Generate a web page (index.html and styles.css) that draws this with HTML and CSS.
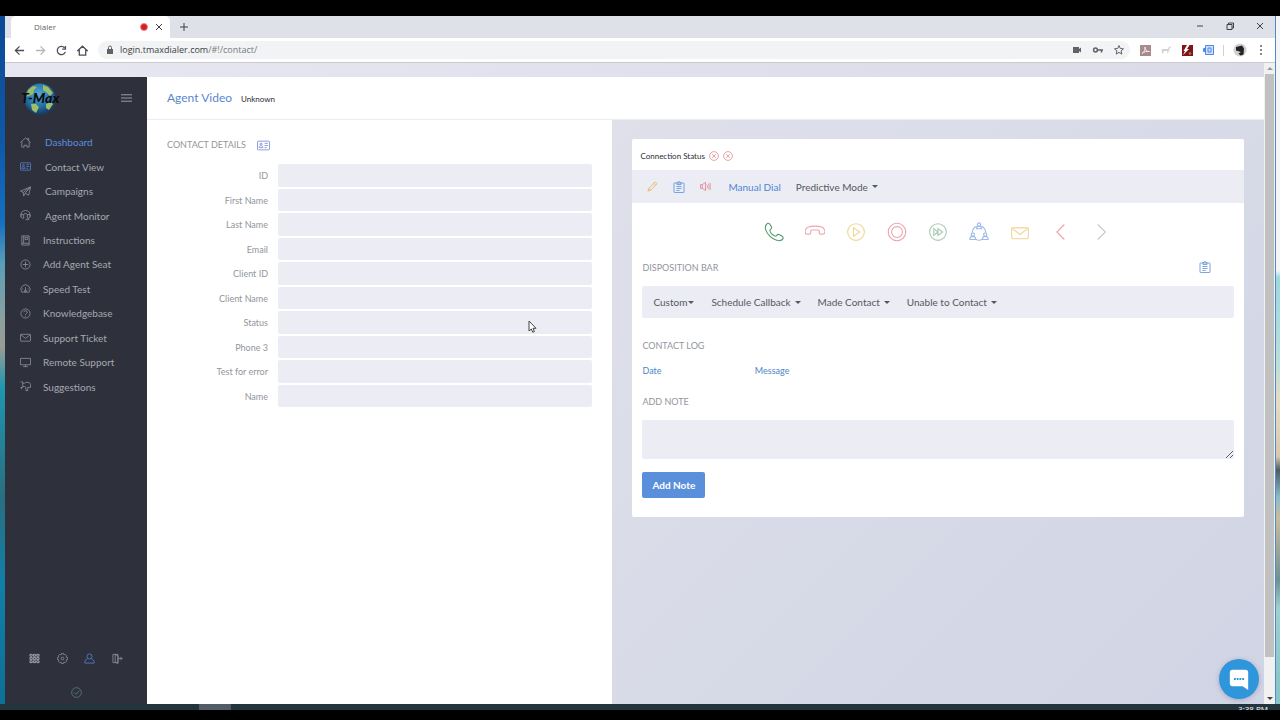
FILE: index.html
```html
<!DOCTYPE html>
<html lang="en">
<head>
  <meta charset="UTF-8">
  <meta name="viewport" content="width=device-width, initial-scale=1.0">
  <title>Dialer</title>
  <link rel="stylesheet" href="styles.css">
</head>
<body>
  <!-- Shared icons -->
  <svg class="sprite" aria-hidden="true">
    <symbol id="i-card" viewBox="0 0 24 24"><rect x="1" y="4" width="22" height="16" rx="1"/><circle cx="7.500" cy="9.500" r="2"/><path d="M4 16c0-5 7-5 7 0zM14 8h6M14 12h6M14 16h4"/></symbol>
    <symbol id="i-clip" viewBox="0 0 24 24"><rect x="2" y="4" width="20" height="19" rx="1"/><path d="M8 3h2a2 2 0 0 1 4 0h2v4H8zM7 11h10M7 15h10M7 19h6"/></symbol>
    <symbol id="i-mail" viewBox="0 0 24 24"><rect x="1" y="5" width="22" height="15" rx="1"/><path d="M2 6l10 8 10-8"/></symbol>
    <symbol id="i-x" viewBox="0 0 24 24"><circle cx="12" cy="12" r="10.500"/><path d="M7.500 7.500l9 9M16.500 7.500l-9 9"/></symbol>
  </svg>

  <div class="screen">
    <div class="wallpaper wallpaper-left"></div>

    <div class="browser">
      <div class="tab-strip">
        <div class="tab">
          <span class="tab-title">Dialer</span>
          <span class="rec"></span>
          <button class="chrome-btn" aria-label="Close tab"><svg viewBox="0 0 10 10"><path d="M2 2l6 6M8 2l-6 6"/></svg></button>
        </div>
        <button class="chrome-btn new-tab" aria-label="New tab"><svg viewBox="0 0 10 10"><path d="M5 1v8M1 5h8"/></svg></button>
        <div class="window-controls">
          <button class="chrome-btn" aria-label="Minimize"><svg viewBox="0 0 10 10"><path d="M2 5h6"/></svg></button>
          <button class="chrome-btn" aria-label="Restore"><svg viewBox="0 0 10 10"><path d="M2 3.500h5v5H2zM3.500 3.500V2h5v5H7"/></svg></button>
          <button class="chrome-btn" aria-label="Close"><svg viewBox="0 0 10 10"><path d="M2 2l6 6M8 2l-6 6"/></svg></button>
        </div>
      </div>

      <div class="toolbar">
        <button class="nav-btn" aria-label="Back"><svg viewBox="0 0 12 12"><path d="M11 6H2M6 1.500L1.500 6 6 10.500"/></svg></button>
        <button class="nav-btn dim" aria-label="Forward"><svg viewBox="0 0 12 12"><path d="M1 6h9M6 1.500L10.500 6 6 10.500"/></svg></button>
        <button class="nav-btn" aria-label="Reload"><svg viewBox="0 0 12 12"><path d="M10.200 7.500A4.500 4.500 0 1 1 9.300 3M10.300 1v3.500H6.800"/></svg></button>
        <button class="nav-btn" aria-label="Home"><svg viewBox="0 0 12 12"><path d="M1 6l5-4.700L11 6H9.500v5h-7V6z"/></svg></button>
        <div class="omnibox">
          <svg class="lock" viewBox="0 0 8 10"><rect x="1" y="4" width="6" height="5" fill="#5f6368"/><path d="M2.500 4V2.500a1.500 1.500 0 0 1 3 0V4" fill="none" stroke="#5f6368"/></svg>
          <div class="url"><a href="#!/contact/">login.tmaxdialer.com<span>/#!/contact/</span></a></div>
          <svg class="omni-icon" viewBox="0 0 12 12"><path d="M2 3h6v2l2-1.500v5L8 7v2H2z" fill="#5f6368"/></svg>
          <svg class="omni-icon" viewBox="0 0 12 12" fill="none" stroke="#5f6368" stroke-width="1.500"><circle cx="3.500" cy="6" r="1.900"/><path d="M5.500 6H11M9.500 6v2.500"/></svg>
          <svg class="omni-icon" viewBox="0 0 12 12" fill="none" stroke="#5f6368"><path d="M6 1.500l1.300 3 3.200.3-2.400 2.100.7 3.200L6 8.400l-2.800 1.700.7-3.200L1.500 4.800l3.200-.3z"/></svg>
        </div>
        <div class="extensions">
          <svg viewBox="0 0 12 12"><rect x="1" y="1" width="11" height="11" fill="#a98b8d"/><path d="M3 9.500c2-1 3.500-4 3-6.500 0 3 2 5 4.500 4.500C7 7 5 8 3 9.500" fill="none" stroke="#f2e8e8"/></svg>
          <svg viewBox="0 0 12 12"><path d="M1 7l1-2h6l1-2.500 2.500.5-1.500 1-1 2-1 3.500H7.500L7 7H4l-1 2.500H2V6z" fill="#d2d2d2"/></svg>
          <svg viewBox="0 0 12 12"><rect x="1" y="1" width="11" height="11" fill="#821318"/><path d="M2 11l2-4H2.500L6 1h2.500L6 5h2z" fill="#fff"/><circle cx="9" cy="9.500" r="1.300" fill="#7d8a4d"/></svg>
          <svg viewBox="0 0 12 12"><path d="M3.500 1.500h8v9h-8z" fill="#cfe0fb" stroke="#4b86e8"/><path d="M3.500 3.500L1 4.500v3l2.500 1z" fill="#4b86e8"/><path d="M6 4h3v4H6z" fill="none" stroke="#4b86e8"/></svg>
          <span class="divider"></span>
          <svg class="avatar" viewBox="0 0 14 14"><circle cx="7" cy="7" r="6.500" fill="#d0cfd1"/><path d="M3 4l6-1.500 2 3-.5 6-3 1-2-2L8 9 3 7.500z" fill="#222"/></svg>
          <svg class="more" viewBox="0 0 4 12" fill="#5f6368"><circle cx="2" cy="2" r="1"/><circle cx="2" cy="6" r="1"/><circle cx="2" cy="10" r="1"/></svg>
        </div>
      </div>

      <div class="viewport">
        <div class="app">
          <aside class="sidebar">
            <div class="brand">
              <svg class="logo" viewBox="0 0 40 32" role="img" aria-label="T-Max">
                <defs>
                  <radialGradient id="globe" cx="45%" cy="35%" r="62%">
                    <stop offset="0%" stop-color="#58a9d0"/>
                    <stop offset="60%" stop-color="#2574aa"/>
                    <stop offset="100%" stop-color="#153f6c"/>
                  </radialGradient>
                </defs>
                <circle cx="20" cy="16" r="15.500" fill="url(#globe)"/>
                <path d="M8 7l5-4 4 1-3 3-1 4-4 2-3 1zM23 2l5 2 5 6-3 3-4-4-3-2zM11 21l5 0 3 3-3 6-4-3zM26 21l5-2 2 2-4 6-3-2z" fill="#9dbd68"/>
                <text x="1" y="20" class="logo-text">T-Max</text>
              </svg>
              <button class="menu-toggle" aria-label="Toggle menu"><svg viewBox="0 0 12 10"><path d="M0 1.500h12M0 5h12M0 8.500h12"/></svg></button>
            </div>

            <nav class="side-nav">
              <a class="wide active" href="#dashboard"><svg class="icon" viewBox="0 0 24 24"><path d="M1 12L12 2l11 10M4 10v12h5v-4h6v4h5V10M17 6V3h2v5"/></svg>Dashboard</a>
              <a class="wide" href="#contact"><svg class="icon blue"><use href="#i-card"/></svg>Contact View</a>
              <a class="wide" href="#campaigns"><svg class="icon" viewBox="0 0 24 24"><path d="M1 11L23 2l-4 18-8-4-3 6-1-8zM7 14L23 2 11 16"/></svg>Campaigns</a>
              <a class="wide" href="#monitor"><svg class="icon" viewBox="0 0 24 24"><path d="M2 15V10a10 9 0 0 1 20 0v5M2 10h6v8H5l-3-3v-4zM22 10h-6v8h3l3-3v-4zM19 18v3h-7M8 10c0-3 8-3 8 0"/></svg>Agent Monitor</a>
              <a href="#instructions"><svg class="icon" viewBox="0 0 24 24"><path d="M4 2h16v20H4zM4 18h16M8 2v16M11 5h6v5h-6z"/></svg>Instructions</a>
              <a href="#seat"><svg class="icon" viewBox="0 0 24 24"><circle cx="12" cy="12" r="10"/><path d="M12 6v12M6 12h12"/></svg>Add Agent Seat</a>
              <a href="#speed"><svg class="icon" viewBox="0 0 24 24"><path d="M4 20a10 10 0 1 1 16 0zM12 9v7M10 16h4v3h-4zM5 13h2M17 13h2"/></svg>Speed Test</a>
              <a href="#kb"><svg class="icon" viewBox="0 0 24 24"><circle cx="12" cy="12" r="10"/><path d="M8 9c0-4 8-4 8 0 0 3-4 3-4 6M12 17v2"/></svg>Knowledgebase</a>
              <a href="#ticket"><svg class="icon"><use href="#i-mail"/></svg>Support Ticket</a>
              <a href="#remote"><svg class="icon" viewBox="0 0 24 24"><path d="M1 3h22v14H1zM12 17v4M7 21h10"/></svg>Remote Support</a>
              <a href="#suggestions"><svg class="icon" viewBox="0 0 24 24"><path d="M1 2h5v12H1M6 5h4l2-2h8l3 4v7h-6v7h-4v-7l-3-2H6M3 14v4"/></svg>Suggestions</a>
            </nav>

            <div class="side-tools">
              <button aria-label="Apps"><svg class="icon bright" viewBox="0 0 24 24"><path d="M2 3h5v4H2zM9.500 3h5v4h-5zM17 3h5v4h-5zM2 10h5v4H2zM9.500 10h5v4h-5zM17 10h5v4h-5zM2 17h5v4H2zM9.500 17h5v4h-5zM17 17h5v4h-5z"/></svg></button>
              <button aria-label="Settings"><svg class="icon" viewBox="0 0 24 24"><path d="M10 1h4l1 3 3-1 3 3-1 3 3 1v4l-3 1 1 3-3 3-3-1-1 3h-4l-1-3-3 1-3-3 1-3-3-1v-4l3-1-1-3 3-3 3 1z"/><circle cx="12" cy="12" r="3"/></svg></button>
              <button aria-label="Profile"><svg class="icon blue" viewBox="0 0 24 24"><circle cx="12" cy="7.500" r="5.500"/><path d="M8 12l-6 5v5h20v-5l-6-5"/></svg></button>
              <button aria-label="Log out"><svg class="icon" viewBox="0 0 24 24"><path d="M2 3h11v18H2zM7 3l6 3v17l-6-3zM13 12h9M18 8l4 4-4 4"/></svg></button>
            </div>
            <div class="side-status"><svg class="icon" viewBox="0 0 24 24"><circle cx="12" cy="12" r="10.500"/><path d="M7 12l4 4 7-8"/></svg></div>
          </aside>

          <main class="main">
            <header class="page-header">
              <h1>Agent Video</h1>
              <span>Unknown</span>
            </header>

            <div class="columns">
              <section class="details">
                <h2>CONTACT DETAILS <svg class="icon violet"><use href="#i-card"/></svg></h2>
                <form class="fields">
                  <label for="f-id">ID</label><input id="f-id" type="text">
                  <label for="f-first">First Name</label><input id="f-first" type="text">
                  <label for="f-last">Last Name</label><input id="f-last" type="text">
                  <label for="f-email">Email</label><input id="f-email" type="text">
                  <label for="f-client">Client ID</label><input id="f-client" type="text">
                  <label for="f-cname">Client Name</label><input id="f-cname" type="text">
                  <label for="f-status">Status</label><input id="f-status" type="text">
                  <label for="f-phone">Phone 3</label><input id="f-phone" type="text">
                  <label for="f-test">Test for error</label><input id="f-test" type="text">
                  <label for="f-name">Name</label><input id="f-name" type="text">
                </form>
              </section>

              <section class="work">
                <div class="card">
                  <div class="status-row">
                    Connection Status
                    <svg class="icon red"><use href="#i-x"/></svg>
                    <svg class="icon red"><use href="#i-x"/></svg>
                  </div>

                  <div class="action-row">
                    <button class="tool" aria-label="Edit"><svg class="icon orange" viewBox="0 0 24 24"><path d="M2 22l2-6L18 2l4 4L8 20zM15 5l4 4M4 16l4 4"/></svg></button>
                    <button class="tool" aria-label="Notes"><svg class="icon sky"><use href="#i-clip"/></svg></button>
                    <button class="tool" aria-label="Volume"><svg class="icon red" viewBox="0 0 24 24"><path d="M1 8h4l7-5v18l-7-5H1zM5 8v8M15 8c2 2 2 6 0 8M18 6c3 3 3 9 0 12M21 4c4 4 4 12 0 16"/></svg></button>
                    <a class="manual" href="#manual">Manual Dial</a>
                    <button class="menu">Predictive Mode <i class="caret"></i></button>
                  </div>

                  <div class="card-body">
                    <div class="call-row">
                      <button aria-label="Call"><svg viewBox="0 0 24 24" class="c-green"><path d="M3 3c2-3 4-1 6 3 1 2-2 3-2 4 0 3 4 7 7 7 1 0 2-3 4-2 5 2 6 4 4 6-3 3-10 1-15-4S0 6 3 3z"/></svg></button>
                      <button aria-label="Hang up"><svg viewBox="0 0 24 24" class="c-pink"><path d="M0 12c0-3 2-5 4-6 4-1 12-1 16 0 2 1 4 3 4 6 0 4-7 3-7 1 0-1 1-3-1-3.500H8C6 10 7 12 7 13c0 2-7 3-7-1z"/></svg></button>
                      <button aria-label="Play"><svg viewBox="0 0 24 24" class="c-yellow"><circle cx="12" cy="12" r="10"/><path d="M9 7v10l7.500-5z"/></svg></button>
                      <button aria-label="Record"><svg viewBox="0 0 24 24" class="c-pink"><circle cx="12" cy="12" r="10.500"/><circle cx="12" cy="12" r="6.500"/></svg></button>
                      <button aria-label="Skip"><svg viewBox="0 0 24 24" class="c-sage"><circle cx="12" cy="12" r="10"/><path d="M7 8v8l5-4zM12 8v8l5.500-4z"/></svg></button>
                      <button aria-label="Conference"><svg viewBox="0 0 24 24" class="c-blue"><path d="M9 5a8.500 8.500 0 0 0-5 7M15 5a8.500 8.500 0 0 1 5 7M8 20.500c3 2 5 2 8 0M9 8c0-4 6-4 6 0zM1 21c0-5 7-5 7 0zM16 21c0-5 7-5 7 0z"/><circle cx="12" cy="3" r="2"/><circle cx="4.500" cy="15" r="2"/><circle cx="19.500" cy="15" r="2"/></svg></button>
                      <button aria-label="Mail"><svg viewBox="0 0 24 24" class="c-yellow"><rect x="2" y="7" width="20" height="13" rx="1"/><path d="M3 8l9 7 9-7"/></svg></button>
                      <button aria-label="Previous"><svg viewBox="0 0 24 24" class="c-pink"><path d="M16 3l-9 9 9 9"/></svg></button>
                      <button aria-label="Next"><svg viewBox="0 0 24 24" class="c-gray"><path d="M7 3l9 9-9 9"/></svg></button>
                    </div>

                    <div class="heading-row">
                      <h3>DISPOSITION BAR</h3>
                      <button class="tool" aria-label="Disposition notes"><svg class="icon sky"><use href="#i-clip"/></svg></button>
                    </div>
                    <div class="disposition">
                      <button class="menu tight">Custom<i class="caret"></i></button>
                      <button class="menu">Schedule Callback <i class="caret"></i></button>
                      <button class="menu">Made Contact <i class="caret"></i></button>
                      <button class="menu">Unable to Contact <i class="caret"></i></button>
                    </div>

                    <h3>CONTACT LOG</h3>
                    <table class="log">
                      <thead><tr><th scope="col" class="date">Date</th><th scope="col">Message</th></tr></thead>
                    </table>

                    <h3><label for="note">ADD NOTE</label></h3>
                    <textarea id="note"></textarea>
                    <button class="primary">Add Note</button>
                  </div>
                </div>
              </section>
            </div>
          </main>
        </div>
        <div class="scrollbar"><i class="up"></i><span class="thumb"></span><i class="down"></i></div>
        <button class="chat" aria-label="Open chat"><svg viewBox="0 0 24 24"><path d="M5 2h14a3 3 0 0 1 3 3v19l-6-4H5a3 3 0 0 1-3-3V5a3 3 0 0 1 3-3z" fill="#fff"/><path d="M6.500 12h11" stroke="#2f96dc" stroke-width="2" stroke-dasharray="2 1"/></svg></button>
        <svg class="cursor" viewBox="0 0 9 13"><path d="M1 1v10l2.300-2 1.500 3.300 1.600-.8L5 8.300h3z" fill="#fff" stroke="#444"/></svg>
      </div>
    </div>

    <div class="wallpaper wallpaper-right"></div>
  </div>
  <div class="taskbar"><span class="task"></span><span class="clock">3:38 PM</span></div>
</body>
</html>
```
FILE: styles.css
```css
* {
  box-sizing: border-box;
}

body {
  margin: 0;
  min-height: 100vh;
  padding: 16px 0 10px;
  display: flex;
  flex-direction: column;
  background: #000;
  color: #555860;
  font-family: Lato, "Liberation Sans", sans-serif;
  font-size: 10px;
  line-height: 14px;
}

button {
  padding: 0;
  border: 0;
  background: none;
  color: inherit;
  font: inherit;
}

a {
  color: inherit;
  text-decoration: none;
}

h1, h2, h3 {
  margin: 0;
  font-weight: 400;
}

svg {
  display: block;
  flex: none;
}

.sprite {
  position: absolute;
  width: 0;
  height: 0;
}

.icon {
  width: 11px;
  height: 11px;
  fill: none;
  stroke: #8c8f99;
  stroke-width: 1.8;
}

.icon.bright { stroke: #b4b6be; }
.icon.blue { stroke: #5580cc; }
.icon.violet { stroke: #8f9bdc; width: 13px; height: 13px; }
.icon.red { stroke: #e0828c; }
.icon.orange { stroke: #e8b45c; }
.icon.sky { stroke: #6a9bdc; width: 12px; height: 12px; }

/* Desktop */
.screen {
  flex: 1;
  display: flex;
}

.wallpaper {
  width: 5px;
}

.wallpaper-left {
  background: linear-gradient(#0b4a94 0, #0e58a8 18%, #1470c0 30%, #5a9fb8 36%, #8ba0a0 44%, #9a9c92 48%, #1e96b0 54%, #2a6e80 70%, #127fa8 82%, #0d7096 100%);
}

.wallpaper-right {
  border-left: 1px solid #4c8cc8;
  background: linear-gradient(#f4f5f7 0, #f4f5f7 37%, #9fd8de 38%, #b9dedc 50%, #e6dcc4 56%, #d8c9ae 64%, #4c5c66 66%, #8cbccb 70%, #c9bd9c 73%, #6f9096 82%, #9ed0d0 86%, #86c4c6 100%);
}

.taskbar {
  height: 6px;
  padding: 0 12px 0 199px;
  display: flex;
  justify-content: space-between;
  overflow: hidden;
  background: #22343d;
}

.task {
  width: 32px;
  background: #525c64;
}

.clock {
  color: #fff;
  font: 8px/10px "Open Sans", sans-serif;
}

/* Browser */
.browser {
  flex: 1;
  display: flex;
  flex-direction: column;
  min-width: 0;
}

.tab-strip {
  height: 22px;
  padding-left: 6px;
  display: flex;
  align-items: center;
  background: #dfe1e9;
}

.tab {
  width: 159px;
  height: 22px;
  padding: 0 6px 0 23px;
  display: flex;
  align-items: center;
  border-radius: 5px 5px 0 0;
  background: #fff;
}

.tab-title {
  flex: 1;
  color: #5f6368;
  font: 8px/14px "Open Sans", sans-serif;
}

.rec {
  width: 8px;
  height: 8px;
  margin-right: 6px;
  border: 1px solid #e8888c;
  border-radius: 50%;
  background: #cf2027;
}

.chrome-btn svg {
  width: 10px;
  height: 10px;
  fill: none;
  stroke: #3c4043;
}

.new-tab {
  margin-left: 9px;
}

.window-controls {
  margin-left: auto;
  padding: 0 10px 2px 0;
  display: flex;
  gap: 20px;
}

.toolbar {
  height: 25px;
  padding: 0 12px 0 9px;
  display: flex;
  align-items: center;
  border-bottom: 1px solid #c9cad0;
  background: #fff;
}

.nav-btn {
  margin-right: 10px;
}

.nav-btn svg {
  width: 11px;
  height: 11px;
  fill: none;
  stroke: #4b4f54;
  stroke-width: 1.4;
}

.nav-btn.dim svg {
  stroke: #b4b6b9;
}

.omnibox {
  flex: 1;
  height: 18px;
  padding: 0 5px 0 8px;
  display: flex;
  align-items: center;
  gap: 9px;
  border-radius: 9px;
  background: #f1f3f4;
}

.lock {
  width: 8px;
  height: 10px;
}

.url {
  flex: 1;
  margin-left: -3px;
  color: #3c4043;
  font: 9px/14px "Open Sans", sans-serif;
}

.url span {
  color: #777b80;
}

.omni-icon {
  width: 12px;
  height: 12px;
}

.extensions {
  padding-left: 9px;
  display: flex;
  align-items: center;
  gap: 9px;
}

.extensions svg {
  width: 12px;
  height: 12px;
}

.extensions .avatar {
  width: 14px;
  height: 14px;
  margin-right: 3px;
}

.extensions .more {
  width: 4px;
}

.divider {
  width: 1px;
  height: 11px;
  background: #d0d2d5;
}

.viewport {
  position: relative;
  flex: 1;
  display: flex;
}

.app {
  flex: 1;
  padding-top: 14px;
  display: flex;
  background: linear-gradient(90deg, #e6e7f1, #dadbe7);
}

.scrollbar {
  width: 11px;
  padding: 4px 1px;
  display: flex;
  flex-direction: column;
  align-items: center;
  gap: 4px;
  background: #f1f1f1;
}

.thumb {
  width: 9px;
  flex: 1;
  margin-bottom: 36px;
  background: #c1c1c1;
}

.up, .down {
  border: 3px solid transparent;
}

.up {
  border-top: 0;
  border-bottom-color: #9a9a9a;
}

.down {
  border-bottom: 0;
  border-top-color: #444;
}

/* Sidebar */
.sidebar {
  width: 142px;
  display: flex;
  flex-direction: column;
  background: #2e313b;
}

.brand {
  height: 53px;
  padding: 6px 15px 0;
  display: flex;
  align-items: flex-start;
  justify-content: space-between;
}

.logo {
  width: 40px;
  height: 32px;
}

.logo-text {
  font: italic 900 14px Lato, sans-serif;
  fill: #0a0c10;
}

.menu-toggle {
  padding-top: 10px;
}

.menu-toggle svg {
  width: 11px;
  height: 10px;
  stroke: #a3a6ae;
}

.side-nav {
  height: 269px;
  display: grid;
  grid-auto-rows: 1fr;
}

.side-nav a {
  padding-left: 15px;
  display: flex;
  align-items: center;
  gap: 12px;
  color: #a6a8b2;
}

.side-nav .wide {
  gap: 14px;
}

.side-nav .active {
  color: #5b8ee0;
}

.side-tools {
  margin-top: auto;
  padding: 0 24px;
  display: flex;
  justify-content: space-between;
}

.side-status {
  padding: 23px 0 6px;
  display: flex;
  justify-content: center;
}

.side-status .icon {
  stroke: #5b7f78;
}

/* Main */
.main {
  flex: 1;
  display: flex;
  flex-direction: column;
}

.page-header {
  height: 43px;
  padding: 0 20px;
  display: flex;
  align-items: center;
  gap: 9px;
  border-bottom: 1px solid #ececf4;
  background: #fff;
}

h1 {
  color: #5a87cc;
  font-size: 12px;
}

.page-header span {
  padding-top: 2px;
  color: #2c2e33;
  font-size: 8px;
}

.columns {
  flex: 1;
  display: grid;
  grid-template-columns: 5fr 7fr;
}

.details {
  padding: 18px 20px;
  background: #fff;
}

h2, h3 {
  color: #92959c;
  font-size: 9px;
  line-height: 14px;
}

h2 {
  display: flex;
  align-items: center;
  gap: 11px;
}

.fields {
  height: 243px;
  margin-top: 12px;
  display: grid;
  grid-template-columns: 101px 1fr;
  grid-auto-rows: 1fr;
  gap: 2px 10px;
}

.fields label {
  align-self: center;
  padding-top: 2px;
  color: #92959c;
  font-size: 9px;
  text-align: right;
}

.fields input {
  width: 100%;
  min-width: 0;
  height: 100%;
  padding: 0 6px;
  border: 0;
  border-radius: 2px;
  background: #ececf4;
}

.work {
  padding: 19px 20px;
  background: linear-gradient(135deg, #dfe0ea, #d0d4e4);
}

.card {
  border-radius: 2px;
  background: #fff;
}

.status-row {
  height: 31px;
  padding: 2px 8px 0;
  display: flex;
  align-items: center;
  gap: 4px;
  color: #2c2e33;
  font-size: 8px;
}

.status-row .icon {
  width: 10px;
  height: 10px;
}

.action-row {
  height: 33px;
  padding: 0 15px;
  display: flex;
  align-items: center;
  gap: 15px;
  background: #ececf4;
}

.manual {
  margin-left: 2px;
  color: #4f86d6;
}

.menu {
  display: flex;
  align-items: center;
  gap: 4px;
}

.menu.tight {
  gap: 1px;
}

.caret {
  border: 3px solid transparent;
  border-top-color: #555860;
  border-bottom: 0;
}

.card-body {
  padding: 0 10px 19px;
}

.call-row {
  height: 58px;
  display: flex;
  align-items: center;
  justify-content: center;
}

.call-row button {
  width: 41px;
  display: flex;
  justify-content: center;
}

.call-row svg {
  width: 20px;
  height: 20px;
  fill: none;
  stroke-width: 1.3;
}

.call-row .c-green { stroke: #4f9d69; }
.call-row .c-pink { stroke: #eba4ad; }
.call-row .c-yellow { stroke: #f3d294; }
.call-row .c-sage { stroke: #a9c9b5; }
.call-row .c-blue { stroke: #9dbaec; }
.call-row .c-gray { stroke: #c6c7d2; }

.heading-row {
  padding-right: 23px;
  display: flex;
  justify-content: space-between;
}

.heading-row .tool {
  align-self: flex-start;
}

.disposition {
  height: 32px;
  margin: 11px 0 21px;
  padding: 0 11px;
  display: flex;
  align-items: center;
  gap: 17px;
  border-radius: 2px;
  background: #ececf4;
}

.log {
  width: 100%;
  margin: 11px 0 17px;
  border-collapse: collapse;
}

.log th {
  padding: 0;
  color: #4f86c6;
  font-size: 9px;
  font-weight: 400;
  text-align: left;
}

.log .date {
  width: 19%;
}

textarea {
  display: block;
  width: 100%;
  height: 39px;
  margin: 11px 0 13px;
  border: 0;
  border-radius: 2px;
  background: #ececf4;
}

.primary {
  height: 26px;
  padding: 0 10px;
  border-radius: 2px;
  background: #5a8fdc;
  color: #fff;
  font-weight: 700;
}

/* Overlays */
.chat {
  position: absolute;
  right: 16px;
  bottom: 5px;
  width: 40px;
  height: 40px;
  display: flex;
  align-items: center;
  justify-content: center;
  border-radius: 50%;
  background: #2f96dc;
  box-shadow: 0 1px 5px rgba(60, 70, 110, 0.3);
}

.chat svg {
  width: 22px;
  height: 22px;
}

.cursor {
  position: absolute;
  left: 523px;
  top: 257px;
  width: 9px;
  height: 13px;
}
```
